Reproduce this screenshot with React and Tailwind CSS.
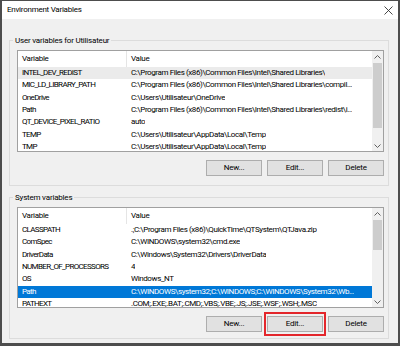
const userVars = [
  ["INTEL_DEV_REDIST", "C:\\Program Files (x86)\\Common Files\\Intel\\Shared Libraries\\"],
  ["MIC_LD_LIBRARY_PATH", "C:\\Program Files (x86)\\Common Files\\Intel\\Shared Libraries\\compil..."],
  ["OneDrive", "C:\\Users\\Utilisateur\\OneDrive"],
  ["Path", "C:\\Program Files (x86)\\Common Files\\Intel\\Shared Libraries\\redist\\i..."],
  ["QT_DEVICE_PIXEL_RATIO", "auto"],
  ["TEMP", "C:\\Users\\Utilisateur\\AppData\\Local\\Temp"],
  ["TMP", "C:\\Users\\Utilisateur\\AppData\\Local\\Temp"],
];

const systemVars = [
  ["CLASSPATH", ".;C:\\Program Files (x86)\\QuickTime\\QTSystem\\QTJava.zip"],
  ["ComSpec", "C:\\WINDOWS\\system32\\cmd.exe"],
  ["DriverData", "C:\\Windows\\System32\\Drivers\\DriverData"],
  ["NUMBER_OF_PROCESSORS", "4"],
  ["OS", "Windows_NT"],
  ["Path", "C:\\WINDOWS\\system32;C:\\WINDOWS;C:\\WINDOWS\\System32\\Wb..."],
  ["PATHEXT", ".COM;.EXE;.BAT;.CMD;.VBS;.VBE;.JS;.JSE;.WSF;.WSH;.MSC"],
];

function ScrollArrow({ up }) {
  return (
    <div className="h-[11px] flex items-center justify-center">
      <svg width="7" height="4" viewBox="0 0 7 4">
        <path
          d={up ? "M0.5 3.5L3.5 0.5L6.5 3.5" : "M0.5 0.5L3.5 3.5L6.5 0.5"}
          fill="none"
          stroke="#606060"
          strokeWidth="1"
        />
      </svg>
    </div>
  );
}

function VarList({ rows, selected, focused, heightClass, thumbClass }) {
  return (
    <div className={`flex ${heightClass} border border-[#a0a0a0] bg-white overflow-hidden`}>
      <div className="flex-1 min-w-0 overflow-hidden">
        <div className="flex h-[16px] items-center">
          <div className="w-[109px] h-full pl-[4px] border-r border-[#e5e5e5] flex items-center tracking-[-0.3px]">
            Variable
          </div>
          <div className="pl-[4px] tracking-[-0.3px]">Value</div>
        </div>
        {rows.map(([name, value], i) => (
          <div
            key={name}
            className={`flex h-[12.33px] items-center whitespace-nowrap ${
              i === selected
                ? focused
                  ? "bg-[#0078d7] text-white"
                  : "bg-[#ebebeb]"
                : ""
            }`}
          >
            <div className="w-[109px] shrink-0 pl-[4px] overflow-hidden tracking-[-0.65px]">{name}</div>
            <div className="pl-[4px] overflow-hidden tracking-[-0.4px]">{value}</div>
          </div>
        ))}
      </div>
      <div className="w-[11px] flex flex-col bg-[#f0f0f0]">
        <ScrollArrow up />
        <div className="flex-1">
          <div className={`mx-px bg-[#cdcdcd] ${thumbClass}`} />
        </div>
        <ScrollArrow />
      </div>
    </div>
  );
}

function Button({ children }) {
  return (
    <div className="w-[56px] h-[16px] bg-[#e1e1e1] border border-[#adadad] flex items-center justify-center tracking-[-0.2px]">
      {children}
    </div>
  );
}

export default function App() {
  return (
    <div className="w-[400px] h-[346px] flex flex-col border-l-2 border-r-2 border-t border-b-[3px] border-[#4d4d4d] font-['Roboto',sans-serif] text-[8px] leading-none text-black">
      {/* Title bar */}
      <div className="h-[18px] bg-white flex items-center justify-between pl-[5px] pr-[5px]">
        <span className="text-[8px] tracking-[-0.25px]">Environment Variables</span>
        <svg width="9" height="9" viewBox="0 0 9 9">
          <path d="M0.5 0.5L8.5 8.5M8.5 0.5L0.5 8.5" stroke="#333" strokeWidth="0.9" />
        </svg>
      </div>

      <div className="flex-1 bg-[#f0f0f0] pl-[7px] pr-[9px] pt-[21px]">
        {/* User variables */}
        <div className="border border-[#dcdcdc]">
          <div className="-mt-[7px] ml-[3px] px-[2px] h-[13px] w-fit bg-[#f0f0f0] flex items-center tracking-[-0.2px]">
            User variables for Utilisateur
          </div>
          <div className="pl-[7px] pr-[4px] pb-[9px]">
            <div className="mt-[3px]">
              <VarList
                rows={userVars}
                selected={0}
                focused={false}
                heightClass="h-[102px]"
                thumbClass="mt-px h-[65px]"
              />
            </div>
            <div className="mt-[8px] flex justify-end gap-[5px]">
              <Button>New...</Button>
              <Button>Edit...</Button>
              <Button>Delete</Button>
            </div>
          </div>
        </div>

        {/* System variables */}
        <div className="mt-[11px] border border-[#dcdcdc]">
          <div className="-mt-[7px] ml-[3px] px-[2px] h-[13px] w-fit bg-[#f0f0f0] flex items-center tracking-[-0.2px]">
            System variables
          </div>
          <div className="pl-[7px] pr-[4px] pb-[6px]">
            <div className="mt-[3px]">
              <VarList
                rows={systemVars}
                selected={5}
                focused={true}
                heightClass="h-[101px]"
                thumbClass="mt-px h-[30px]"
              />
            </div>
            <div className="mt-[8px] flex justify-end gap-[5px]">
              <Button>New...</Button>
              <div className="-mx-[3px] -my-[4px] border-2 border-[#e3262b] px-px py-[2px]">
                <Button>Edit...</Button>
              </div>
              <Button>Delete</Button>
            </div>
          </div>
        </div>
      </div>
    </div>
  );
}
